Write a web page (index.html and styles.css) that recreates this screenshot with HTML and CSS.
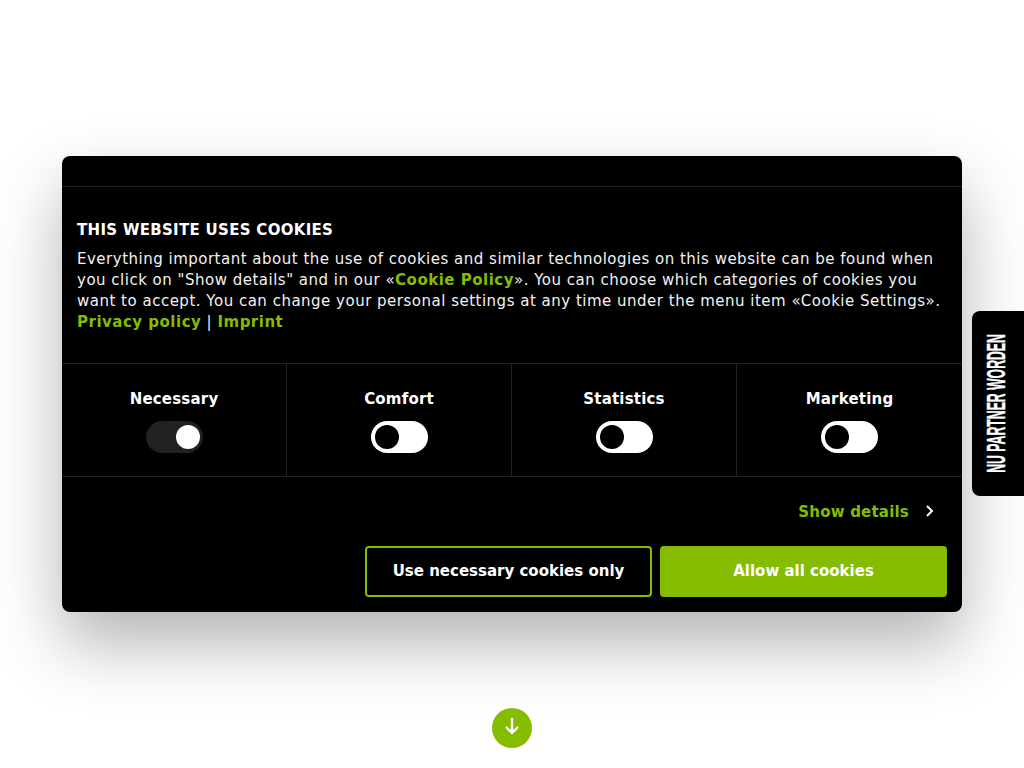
FILE: index.html
```html
<!DOCTYPE html>
<html lang="en">
<head>
    <meta charset="UTF-8">
    <meta name="viewport" content="width=device-width, initial-scale=1.0">
    <title>Cookies</title>
    <link rel="stylesheet" href="styles.css">
</head>
<body>
    <div class="dialog">
        <div class="dialog-top"></div>
        <div class="dialog-body">
            <h2>THIS WEBSITE USES COOKIES</h2>
            <p>
                Everything important about the use of cookies and similar technologies on this website can be found when
                you click on "Show details" and in our «<a href="#">Cookie Policy</a>». You can choose which categories of cookies you
                want to accept. You can change your personal settings at any time under the menu item «Cookie Settings».
                <a href="#">Privacy policy</a> | <a href="#">Imprint</a>
            </p>
        </div>
        <div class="categories">
            <div class="category">
                <strong>Necessary</strong>
                <span class="toggle toggle-on"><span class="knob"></span></span>
            </div>
            <div class="category">
                <strong>Comfort</strong>
                <span class="toggle"><span class="knob"></span></span>
            </div>
            <div class="category">
                <strong>Statistics</strong>
                <span class="toggle"><span class="knob"></span></span>
            </div>
            <div class="category">
                <strong>Marketing</strong>
                <span class="toggle"><span class="knob"></span></span>
            </div>
        </div>
        <div class="dialog-footer">
            <a class="details" href="#">
                Show details
                <svg width="10" height="14" viewBox="0 0 10 14"><path d="M2 2l5 5-5 5" fill="none" stroke="#fff" stroke-width="2"/></svg>
            </a>
            <div class="buttons">
                <button class="btn btn-outline">Use necessary cookies only</button>
                <button class="btn btn-solid">Allow all cookies</button>
            </div>
        </div>
    </div>

    <a class="partner-tab" href="#"><span>NU PARTNER WORDEN</span></a>

    <a class="scroll-down" href="#">
        <svg width="16" height="18" viewBox="0 0 16 18"><path d="M8 2v14M2.500 10.500L8 16l5.500-5.500" fill="none" stroke="#fff" stroke-width="2.400" stroke-linecap="round" stroke-linejoin="round"/></svg>
    </a>
</body>
</html>
```

FILE: styles.css
```css
html, body {
    height: 100%;
    margin: 0;
}

body {
    background: #fff;
    font-family: "DejaVu Sans", sans-serif;
    font-size: 15px;
    letter-spacing: 0.3px;
    color: #fff;
    display: flex;
    justify-content: center;
    align-items: center;
    overflow: hidden;
}

a {
    color: #85bc00;
    font-weight: bold;
    text-decoration: none;
}

.dialog {
    width: 900px;
    height: 456px;
    background: #000;
    border-radius: 8px;
    box-shadow: 0 32px 68px rgba(0,0,0,0.3);
    display: flex;
    flex-direction: column;
}

.dialog-top {
    height: 30px;
    border-bottom: 1px solid #212121;
}

.dialog-body {
    height: 176px;
    padding: 33px 15px 0;
    box-sizing: border-box;
    line-height: 21px;
}

.dialog-body h2 {
    font-size: 15px;
    line-height: 21px;
    margin: 0 0 8px;
}

.dialog-body p {
    margin: 0;
    letter-spacing: 0.5px;
    color: #f2f2f2;
}

.categories {
    display: flex;
    height: 114px;
    box-sizing: border-box;
    border-top: 1px solid #212121;
    border-bottom: 1px solid #212121;
}

.category {
    flex: 0 0 225px;
    box-sizing: border-box;
    display: flex;
    flex-direction: column;
    align-items: center;
    gap: 11px;
    padding-top: 25px;
    border-right: 1px solid #212121;
    line-height: 21px;
}

.category strong {
    letter-spacing: 0.2px;
}

.category:last-child {
    border-right: 0;
}

.toggle {
    width: 57px;
    height: 32px;
    border-radius: 16px;
    background: #fff;
    display: flex;
    align-items: center;
    padding: 0 4px;
    box-sizing: border-box;
}

.knob {
    width: 24px;
    height: 24px;
    border-radius: 50%;
    background: #000;
}

.toggle-on {
    background: #212121;
    justify-content: flex-end;
    padding-right: 3px;
}

.toggle-on .knob {
    background: #fff;
}

.dialog-footer {
    flex: 1;
    display: flex;
    flex-direction: column;
    align-items: flex-end;
    padding: 0 15px;
}

.details {
    display: flex;
    align-items: center;
    gap: 16px;
    height: 69px;
    box-sizing: border-box;
    padding: 1px 12px 0 0;
    line-height: 21px;
    letter-spacing: 0.2px;
}

.details svg {
    margin-top: -2px;
}

.buttons {
    display: flex;
    gap: 8px;
}

.btn {
    width: 287px;
    height: 51px;
    border: 2px solid #85bc00;
    border-radius: 4px;
    color: #fff;
    font: bold 15px "DejaVu Sans", sans-serif;
    padding-bottom: 2px;
}

.btn-outline {
    background: #000;
}

.btn-solid {
    background: #85bc00;
}

.partner-tab {
    position: fixed;
    right: 0;
    top: 311px;
    width: 52px;
    height: 185px;
    background: #000;
    border-radius: 8px 0 0 8px;
    display: flex;
    justify-content: center;
    align-items: center;
    padding-right: 4px;
    box-sizing: border-box;
}

.partner-tab span {
    writing-mode: vertical-rl;
    transform: rotate(180deg) scaleY(0.49);
    font-family: "Liberation Sans", sans-serif;
    font-size: 25px;
    letter-spacing: 0;
    color: #fff;
    -webkit-text-stroke: 0.4px #fff;
    white-space: nowrap;
}

.scroll-down {
    position: fixed;
    left: 492px;
    top: 708px;
    width: 40px;
    height: 40px;
    border-radius: 50%;
    background: #85bc00;
    display: flex;
    justify-content: center;
    align-items: center;
    padding-bottom: 4px;
    box-sizing: border-box;
}
```
